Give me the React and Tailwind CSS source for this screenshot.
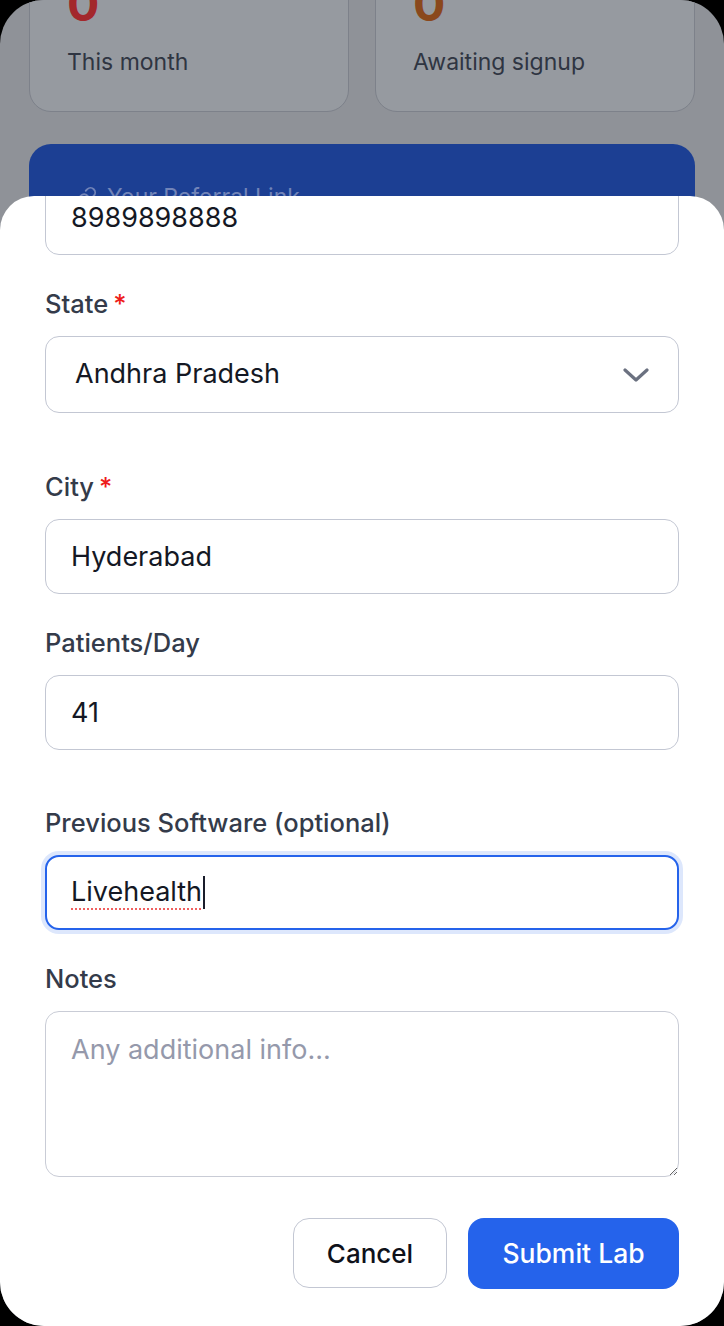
import React from 'react';
import { Link } from 'lucide-react';

const font = { fontFamily: 'Inter, "Noto Sans", sans-serif' };

const Label = ({ children, required }) => (
  <label className="mb-[16px] flex h-[32px] items-center text-[25.5px] font-medium leading-[32px] text-[#343b4a]">
    {children}
    {required && <span className="ml-[5px] text-[#ee1c1c]">*</span>}
  </label>
);

const TextInput = ({ value }) => (
  <input
    readOnly
    value={value}
    className="h-[75px] w-full rounded-[14px] border border-[#c3c7d3] bg-white px-[25px] text-[27px] text-[#141824] outline-none"
  />
);

const App = () => {
  return (
    <div className="h-[1326px] w-[724px] bg-black" style={font}>
      <div className="relative h-full overflow-hidden rounded-[44px] bg-[#8f9298]">
        {/* dimmed page behind the sheet */}
        <div className="-mt-[45px] px-[29px]">
          <div className="grid grid-cols-2 gap-[26px]">
            <div className="flex flex-col rounded-[22px] border border-[#7d818a] bg-[#969aa0] px-[37px] pt-[24px] pb-[35px]">
              <div className="text-[48px] font-bold leading-[48px] text-[#a3282c]">0</div>
              <div className="mt-[20px] text-[23px] leading-[28px] text-[#2f3542]">This month</div>
            </div>
            <div className="flex flex-col rounded-[22px] border border-[#7d818a] bg-[#969aa0] px-[37px] pt-[24px] pb-[35px]">
              <div className="text-[48px] font-bold leading-[48px] text-[#8a481c]">0</div>
              <div className="mt-[20px] text-[23px] leading-[28px] text-[#2f3542]">Awaiting signup</div>
            </div>
          </div>
          <div className="mt-[32px] h-[220px] rounded-[22px] bg-[#1c3f93] px-[46px] pt-[36px]">
            <div className="flex items-center gap-[10px] text-[23px] text-[#7284b8]">
              <Link size={22} />
              <span>Your Referral Link</span>
            </div>
          </div>
        </div>

        {/* bottom sheet */}
        <div className="absolute inset-x-0 top-[196px] bottom-0 overflow-hidden rounded-t-[34px] bg-white px-[45px]">
          <div className="-mt-[16px] flex flex-col gap-[33px]">
            <TextInput value="8989898888" />

            <div className="flex flex-col pb-[25px]">
              <Label required>State</Label>
              <div className="flex h-[77px] items-center justify-between rounded-[14px] border border-[#c3c7d3] bg-white pl-[29px] pr-[29px] text-[27px] text-[#141824]">
                <span>Andhra Pradesh</span>
                <svg width="26" height="16" viewBox="0 0 26 16" fill="none">
                  <polyline points="2,3 13,13 24,3" stroke="#6b7180" strokeWidth="3.2" strokeLinecap="round" strokeLinejoin="round" />
                </svg>
              </div>
            </div>

            <div className="flex flex-col">
              <Label required>City</Label>
              <TextInput value="Hyderabad" />
            </div>

            <div className="flex flex-col pb-[24px]">
              <Label>Patients/Day</Label>
              <TextInput value="41" />
            </div>

            <div className="flex flex-col">
              <Label>Previous Software (optional)</Label>
              <div className="flex h-[75px] items-center rounded-[14px] border-2 border-[#2563eb] bg-white px-[24px] text-[27px] text-[#141824] shadow-[0_0_0_4px_#dde7fc]">
                <span className="underline decoration-[#f06060] decoration-dotted decoration-2 underline-offset-[7px]">Livehealth</span>
                <span className="ml-[1px] h-[33px] w-[2px] bg-[#1a1d2b]" />
              </div>
            </div>

            <div className="flex flex-col">
              <Label>Notes</Label>
              <textarea
                readOnly
                placeholder="Any additional info..."
                className="h-[166px] w-full resize-y rounded-[14px] border border-[#c9ccd6] bg-white px-[25px] pt-[20px] text-[27px] leading-[36px] text-[#141824] outline-none placeholder:text-[#9599ab]"
              />
            </div>
          </div>

          <div className="mt-[41px] flex justify-end gap-[21px]">
            <button className="h-[70px] w-[154px] rounded-[16px] border border-[#c3c7d3] bg-white text-[26px] font-medium text-[#0e111a]">
              Cancel
            </button>
            <button className="h-[71px] w-[211px] rounded-[16px] bg-[#2563eb] text-[26.5px] font-medium text-white">
              Submit Lab
            </button>
          </div>
        </div>
      </div>
    </div>
  );
};

export default App;
